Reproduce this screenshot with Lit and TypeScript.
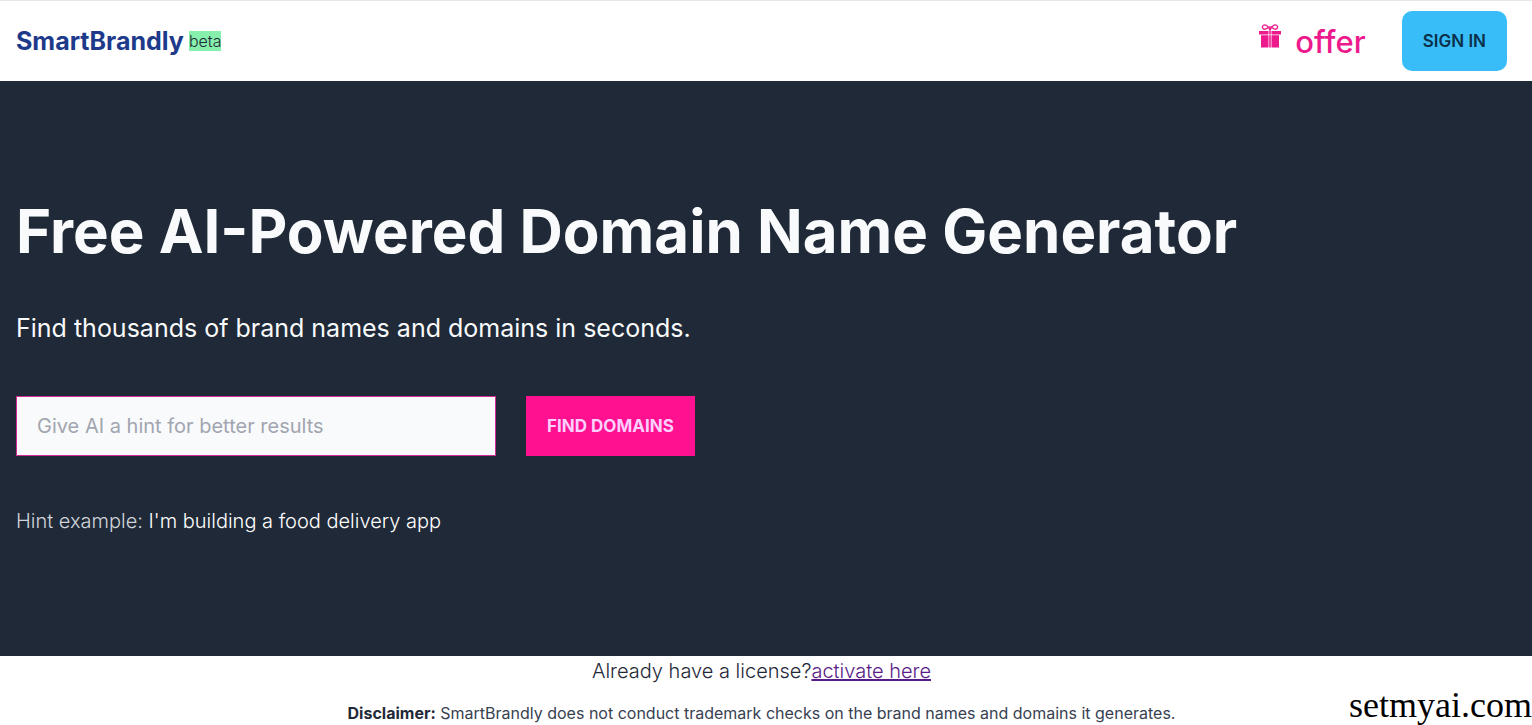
import { LitElement, html, css } from "lit";
import { customElement } from "lit/decorators.js";

@customElement("app-root")
export class AppRoot extends LitElement {
  static styles = css`
    * { box-sizing: border-box; }
    :host {
      display: flex;
      flex-direction: column;
      min-height: 100vh;
      position: relative;
      background: #fff;
      color: #1f2937;
      font-family: Inter, "Liberation Sans", sans-serif;
      font-size: 20px;
      font-weight: 300;
    }
    h1, p { margin: 0; }
    a { text-decoration: none; }
    header {
      display: flex;
      align-items: center;
      justify-content: space-between;
      padding: 10px 25px 10px 16px;
      border-top: 1px solid #e5e7eb;
    }
    .brand { display: flex; align-items: center; gap: 5px; color: #1e3a8a; font-size: 25px; font-weight: 700; line-height: 40px; }
    .beta { background: #86efac; color: #1f2937; font-size: 16px; font-weight: 300; line-height: 20px; }
    .actions { display: flex; align-items: center; gap: 36px; }
    .offer { display: flex; align-items: center; gap: 14px; color: #ec1a8d; font-size: 31px; font-weight: 500; line-height: 40px; padding-top: 2px; font-variant-ligatures: none; }
    .gift { width: 22px; height: 24px; margin-bottom: 12px; }
    button { font-family: inherit; border: 0; cursor: pointer; height: 60px; padding: 0 21px; font-size: 17px; font-weight: 600; }
    .signin { background: #38bdf8; color: #0c2f49; border-radius: 10px; }
    .hero {
      display: flex;
      flex-direction: column;
      align-items: flex-start;
      padding: 110px 16px 120px;
      background: #1f2937;
      color: #f9fafb;
    }
    h1 { font-size: 60px; font-weight: 700; line-height: 80px; }
    .lead { margin-top: 40px; font-size: 25px; font-weight: 400; line-height: 35px; }
    form { display: flex; gap: 30px; margin-top: 50px; }
    input {
      width: 480px; height: 60px; padding: 0 20px; border: 1px solid #d42a98; border-radius: 0;
      background: #f9fafb; color: #1f2937; font: inherit; font-size: 20px; font-weight: 400;
    }
    input::placeholder { color: #a1a5b0; opacity: 1; }
    .find { background: #ff1190; color: #fbcfff; font-weight: 700; }
    .hint { margin-top: 50px; line-height: 30px; color: #d1d5db; }
    .hint span { color: #fff; }
    footer { display: flex; flex-direction: column; align-items: center; gap: 12px; padding-right: 9px; line-height: 30px; }
    footer p { max-width: 100%; }
    footer a { color: #581c87; text-decoration: underline; }
    .disclaimer { font-size: 16px; font-weight: 400; margin-bottom: -3px; color: #374151; }
    .disclaimer b { font-weight: 700; color: #1f2937; }
    .mark { position: absolute; right: 0; bottom: 0; font-family: "Liberation Serif", serif; font-size: 36px; font-weight: 400; line-height: 40px; color: #000; }
  `;

  render() {
    return html`
      <header>
        <a class="brand" href="#">SmartBrandly <span class="beta">beta</span></a>
        <div class="actions">
          <a class="offer" href="#">
            <svg class="gift" viewBox="0 0 22 24" aria-hidden="true" fill="currentColor">
              <path d="M0 7h9.5v3.500H0zM12.500 7H22v3.500h-9.500zM10.200 7h1.600v3.500h-1.600zM2 11.300h7.500v12.200H2zM12.500 11.300H20v12.200h-7.500zM10.200 11.300h1.600v12.200h-1.600z" />
              <path d="M11 6.500C10 2.500 6.500 0 4.500 1.200 2.500 2.500 3.500 5.500 6 5.200 8 5 9 2.800 11 2.800S14 5 16 5.200C18.500 5.500 19.500 2.500 17.500 1.200 15.500 0 12 2.500 11 6.500" fill="none" stroke="currentColor" stroke-width="1.300" />
            </svg>
            offer
          </a>
          <button class="signin" type="button">SIGN IN</button>
        </div>
      </header>
      <main class="hero">
        <h1>Free AI-Powered Domain Name Generator</h1>
        <p class="lead">Find thousands of brand names and domains in seconds.</p>
        <form @submit=${(e: Event) => e.preventDefault()}>
          <input type="text" aria-label="Hint" placeholder="Give AI a hint for better results" />
          <button class="find" type="submit">FIND DOMAINS</button>
        </form>
        <p class="hint">Hint example: <span>I'm building a food delivery app</span></p>
      </main>
      <footer>
        <p>Already have a license?<a href="#">activate here</a></p>
        <p class="disclaimer"><b>Disclaimer:</b> SmartBrandly does not conduct trademark checks on the brand names and domains it generates.</p>
      </footer>
      <div class="mark">setmyai.com</div>
    `;
  }
}
